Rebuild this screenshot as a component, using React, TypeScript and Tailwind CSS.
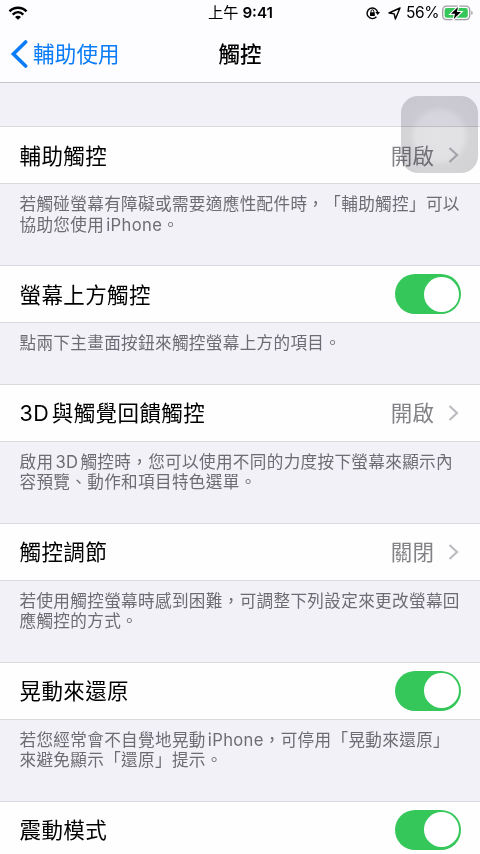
import { Fragment } from "react";

interface SettingGroup {
  id: string;
  label: string;
  value?: string;
  enabled?: boolean;
  note?: string[];
}

const groups: SettingGroup[] = [
  {
    id: "assistive",
    label: "輔助觸控",
    value: "開啟",
    note: ["若觸碰螢幕有障礙或需要適應性配件時，「輔助觸控」可以", "協助您使用iPhone。"],
  },
  {
    id: "reachability",
    label: "螢幕上方觸控",
    enabled: true,
    note: ["點兩下主畫面按鈕來觸控螢幕上方的項目。"],
  },
  {
    id: "haptic",
    label: "3D與觸覺回饋觸控",
    value: "開啟",
    note: ["啟用3D觸控時，您可以使用不同的力度按下螢幕來顯示內", "容預覽、動作和項目特色選單。"],
  },
  {
    id: "accommodations",
    label: "觸控調節",
    value: "關閉",
    note: ["若使用觸控螢幕時感到困難，可調整下列設定來更改螢幕回", "應觸控的方式。"],
  },
  {
    id: "shake",
    label: "晃動來還原",
    enabled: true,
    note: ["若您經常會不自覺地晃動iPhone，可停用「晃動來還原」", "來避免顯示「還原」提示。"],
  },
  { id: "vibration", label: "震動模式", enabled: true },
];

export default function App() {
  return (
    <div
      lang="zh-Hant"
      className="relative h-[854px] w-[480px] overflow-hidden bg-[#f2f1f8] font-['Inter','Noto_Sans_CJK_TC',sans-serif] font-[370] text-black [text-spacing-trim:space-all]"
    >
      <header className="h-[83px] border-b border-[#c5c4ca] bg-[#fdfcfe]">
        <StatusBar />
        <NavBar />
      </header>

      <main className="pt-[43px]">
        {groups.map((g) => (
          <SettingSection key={g.id} group={g} />
        ))}
      </main>

      {/* Floating AssistiveTouch button */}
      <div className="absolute left-[401px] top-[96px] h-[77px] w-[77px] rounded-[17px] bg-[radial-gradient(circle_at_50%_52%,#e4e3e6_0%,#e2e1e4_42%,#d6d5d8_54%,#d2d1d4_100%)] mix-blend-multiply" />
    </div>
  );
}

// ── Header ──────────────────────────────────────

function StatusBar() {
  return (
    <div className="grid h-[26px] grid-cols-3 items-center pl-2 pr-[7px] font-normal">
      <WifiIcon />
      <div className="whitespace-nowrap text-center text-[15.2px] leading-[26px]">
        上午<span className="ml-1 font-semibold">9:41</span>
      </div>
      <div className="flex items-center justify-end">
        <RotationLockIcon />
        <LocationIcon />
        <span className="ml-[5px] mr-[3px] text-[15.5px] leading-[26px] tracking-[-0.4px]">56%</span>
        <BatteryIcon />
      </div>
    </div>
  );
}

function NavBar() {
  return (
    <div className="grid h-14 grid-cols-3 items-center">
      <button className="flex items-center pl-[10px] text-[#0a7cf8]">
        <svg width="18" height="28" viewBox="0 0 18 28" fill="none" stroke="currentColor" strokeWidth="3.6">
          <path d="M15.6 2 L3.4 14 L15.6 26" strokeLinecap="round" strokeLinejoin="miter" />
        </svg>
        <span className="ml-[5px] whitespace-nowrap text-[21.5px] leading-7 tracking-[0.2px]">輔助使用</span>
      </button>
      <h1 className="text-center text-[21.5px] font-medium leading-7">觸控</h1>
    </div>
  );
}

// ── Settings list ──────────────────────────────────────

function SettingSection({ group }: { group: SettingGroup }) {
  return (
    <section>
      <div className="flex h-[58px] items-center justify-between border-y border-[#dad9de] bg-[#fefefe] pl-[19.5px] pr-[19px]">
        <span className="pt-px text-[21.5px] leading-8 tracking-[0.4px] [text-autospace:normal]">{group.label}</span>
        {group.enabled !== undefined && <Toggle on={group.enabled} />}
        {group.value && (
          <span className="flex items-center text-[#828186]">
            <span className="pt-px text-[21.5px] leading-8 tracking-[0.4px]">{group.value}</span>
            <svg className="ml-[13.5px] mr-[2px] text-[#bcbbc0]" width="11" height="18" viewBox="0 0 11 18" fill="none" stroke="currentColor" strokeWidth="2.2">
              <path d="M1.5 2 L9 9 L1.5 16" />
            </svg>
          </span>
        )}
      </div>
      {group.note && (
        <p className="whitespace-nowrap pb-[30px] pl-[19.5px] pt-[10px] text-[16.6px] leading-[20.5px] tracking-[0.34px] text-[#6d6c72] [text-autospace:normal]">
          {group.note.map((line, i) => (
            <Fragment key={line}>
              {i > 0 && <br />}
              {line}
            </Fragment>
          ))}
        </p>
      )}
    </section>
  );
}

function Toggle({ on }: { on: boolean }) {
  return (
    <div
      role="switch"
      aria-checked={on}
      className={`flex h-10 w-[66px] items-center rounded-full px-[2.5px] ${on ? "justify-end bg-[#36c75b]" : "justify-start bg-[#e9e9eb]"}`}
    >
      <div className="h-[35px] w-[35px] rounded-full bg-white" />
    </div>
  );
}

// ── Status icons ──────────────────────────────────────

function WifiIcon() {
  return (
    <svg width="20" height="14" viewBox="0 0 20 14" fill="none" stroke="black" strokeWidth="2.5">
      <path d="M1.5 5.3 C6.3 0.4 13.7 0.4 18.5 5.3" />
      <path d="M4.7 8.6 C7.8 5.6 12.2 5.6 15.3 8.6" />
      <path d="M10 13.8 L7 10.9 C8.7 9.4 11.3 9.4 13 10.9 Z" fill="black" stroke="none" />
    </svg>
  );
}

function RotationLockIcon() {
  return (
    <svg className="mr-px" width="14" height="14" viewBox="0 0 14 14" fill="none" stroke="black">
      <path d="M10.4 10.8 A5.3 5.3 0 1 1 11.6 6.2" strokeWidth="1.4" />
      <path d="M9.4 6 H14 L11.7 9 Z" fill="black" stroke="none" />
      <rect x="4" y="6.2" width="4.8" height="3.9" rx="0.5" fill="black" stroke="none" />
      <path d="M5 6.5 V5.2 A1.4 1.4 0 0 1 7.8 5.2 V6.5" strokeWidth="1" />
    </svg>
  );
}

function LocationIcon() {
  return (
    <svg className="ml-[7px]" width="13" height="13" viewBox="0 0 13 13" fill="none" stroke="black" strokeWidth="1.4" strokeLinejoin="round">
      <path d="M12 1 L1 6 L6.2 6.9 L7.4 12 Z" />
    </svg>
  );
}

function BatteryIcon() {
  return (
    <svg width="31" height="16" viewBox="0 0 31 16" fill="none">
      <rect x="0.7" y="1.2" width="27" height="13.4" rx="3.8" stroke="#9d9ca1" strokeWidth="1.3" />
      <path d="M29.3 5.7 C31.1 6.4 31.1 9.4 29.3 10.1 Z" fill="#9d9ca1" />
      <rect x="2.6" y="3" width="23.2" height="9.8" rx="2.2" fill="#36c75b" />
      <path d="M16 2 L9 8.8 H13 L11.8 14 L18.9 7 H14.9 Z" fill="black" stroke="white" strokeWidth="2.2" paintOrder="stroke" />
    </svg>
  );
}
